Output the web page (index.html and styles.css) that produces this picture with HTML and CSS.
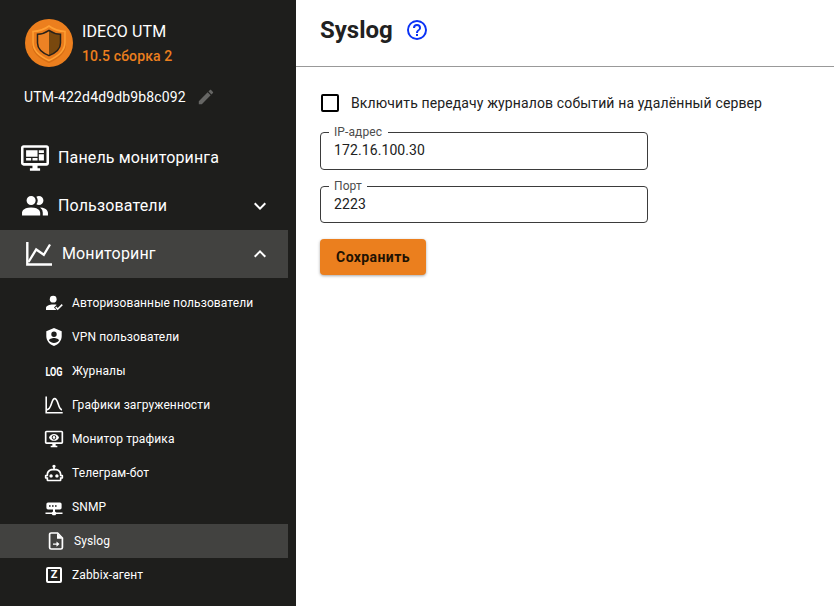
FILE: index.html
```html
<!DOCTYPE html>
<html lang="ru">
<head>
<meta charset="utf-8">
<title>Syslog</title>
<link rel="stylesheet" href="styles.css">
</head>
<body>
<div class="app">
  <aside class="sidebar">
    <header class="brand">
      <svg class="logo" viewBox="0 0 48 48">
        <circle cx="24" cy="24" r="24" fill="#ec7f1e"/>
        <path d="M24 9c-5 3.800-10 5.200-16 5.500v11c0 8.500 7 13.500 16 17.500 9-4 16-9 16-17.500v-11c-6-.300-11-1.700-16-5.500z" fill="#e07317" stroke="#d96f14" stroke-width="2"/>
        <path d="M24 7c-5 3.800-10 5.200-16 5.500v11C8 32 15 37.500 24 41.500c9-4 16-9.500 16-18v-11C34 12.200 29 10.800 24 7z" fill="#e97b1c" stroke="#ffa033" stroke-width="1.600"/>
        <path d="M24 11.500c-4 2.700-7.500 3.800-11.500 4v8.500c0 6 5 10 11.500 12.500z" fill="#ec8224"/>
        <path d="M24 11.500c4 2.700 7.500 3.800 11.500 4v8.500c0 6-5 10-11.500 12.500z" fill="#79480e"/>
        <path d="M24 11.300c-4 2.700-7.500 3.800-11.500 4v8.700c0 6.300 5 10 11.500 12.600 6.500-2.600 11.500-6.300 11.500-12.600v-8.700c-4-.200-7.500-1.300-11.500-4z" fill="none" stroke="#28221a" stroke-width="1.500"/>
      </svg>
      <div class="brand-text">
        <div class="product">IDECO UTM</div>
        <div class="version">10.5 сборка 2</div>
      </div>
    </header>
    <div class="server">
      <span>UTM-422d4d9db9b8c092</span>
      <svg class="edit" viewBox="2 2 20 20"><path d="M20.710 7.040c.390-.390.390-1.040 0-1.410l-2.340-2.340c-.370-.390-1.020-.390-1.410 0l-1.840 1.830 3.750 3.750M3 17.250V21h3.750L17.810 9.930l-3.750-3.750L3 17.250z"/></svg>
    </div>
    <nav>
      <a class="item">
        <svg viewBox="1 1 22 22"><path d="M21 16V4H3V16H21M21 2A2 2 0 0 1 23 4V16A2 2 0 0 1 21 18H14V20H16V22H8V20H10V18H3C1.89 18 1 17.1 1 16V4C1 2.89 1.89 2 3 2H21M5 6H14V11H5V6M15 6H19V8H15V6M19 9V14H15V9H19M5 12H9V14H5V12M10 12H14V14H10V12Z"/></svg>
        <span>Панель мониторинга</span>
      </a>
      <a class="item">
        <svg viewBox="1.200 0.950 21.600 21.600"><path d="M16 17V19H2V17S2 13 9 13 16 17 16 17M12.5 7.500A3.500 3.500 0 1 0 9 11A3.500 3.500 0 0 0 12.500 7.500M15.940 13A5.320 5.320 0 0 1 18 17V19H22V17S22 13.370 15.940 13M15 4A3.390 3.390 0 0 0 13.070 4.590A5 5 0 0 1 13.070 10.410A3.390 3.390 0 0 0 15 11A3.500 3.500 0 0 0 15 4Z"/></svg>
        <span>Пользователи</span>
        <svg class="chevron" viewBox="0 0 24 24"><path d="M7.410 8.580 12 13.170l4.590-4.590L18 10l-6 6-6-6 1.410-1.420z"/></svg>
      </a>
      <a class="item selected">
        <svg viewBox="0 0 28 28"><path d="M2.300 2v22.500H27" fill="none" stroke="#fff" stroke-width="2.400"/><path d="m3.500 22 7.700-12.500 7.600 5.300L25 4.500" fill="none" stroke="#fff" stroke-width="2.300"/></svg>
        <span>Мониторинг</span>
        <svg class="chevron" viewBox="0 0 24 24"><path d="M7.410 15.410 12 10.830l4.590 4.580L18 14l-6-6-6 6 1.410 1.410z"/></svg>
      </a>
      <div class="submenu">
        <a class="sub"><svg viewBox="0 0 20 20"><circle cx="9.200" cy="6.200" r="3.400"/><path d="M2 17v-2c0-2.200 3.100-3.600 7.200-3.600 1.300 0 2.500.1 3.500.400l-2.700 2.700L12.500 17zM13.700 17.300l-2.500-2.600 1-1.100 1.500 1.500 4-4.100 1.100 1.200z"/></svg><span>Авторизованные пользователи</span></a>
        <a class="sub"><svg viewBox="0 0 20 20"><path fill-rule="evenodd" d="M10 1 2.300 4.200v5c0 4.300 3.200 8.400 7.700 9.700 4.500-1.300 7.700-5.400 7.700-9.700v-5zm0 3.500a2.700 2.700 0 1 1 0 5.400 2.700 2.700 0 0 1 0-5.400zm0 6.400c2.200 0 5 1 5 2.500a6 6 0 0 1-10 0c0-1.500 2.800-2.500 5-2.500z"/></svg><span>VPN пользователи</span></a>
        <a class="sub"><span class="log-icon">LOG</span><span>Журналы</span></a>
        <a class="sub"><svg viewBox="0 0 20 20"><path d="M2.200 1.500v16.300h16.500M2.700 14.900c5.600-.600 4.200-11.300 8-11.300s3 10.500 7.300 11.300" fill="none" stroke="#fff" stroke-width="1.600"/></svg><span>Графики загруженности</span></a>
        <a class="sub"><svg viewBox="0 0 24 24"><path d="M3 4V16H21V4H3M3 2H21C22.1 2 23 2.89 23 4V16C23 16.53 22.79 17.04 22.41 17.41C22.04 17.79 21.53 18 21 18H14V20H16V22H8V20H10V18H3C2.47 18 1.96 17.79 1.59 17.41C1.21 17.04 1 16.53 1 16V4C1 2.89 1.89 2 3 2M10.84 8.93C11.15 8.63 11.57 8.45 12 8.45C12.43 8.46 12.85 8.63 13.16 8.94C13.46 9.24 13.64 9.66 13.64 10.09C13.64 10.53 13.46 10.94 13.16 11.25C12.85 11.56 12.43 11.73 12 11.73C11.57 11.73 11.15 11.55 10.84 11.25C10.54 10.94 10.36 10.53 10.36 10.09C10.36 9.66 10.54 9.24 10.84 8.93M10.07 12C10.58 12.53 11.28 12.82 12 12.82C12.72 12.82 13.42 12.53 13.93 12C14.44 11.5 14.73 10.81 14.73 10.09C14.73 9.37 14.44 8.67 13.93 8.16C13.42 7.65 12.72 7.36 12 7.36C11.28 7.36 10.58 7.65 10.07 8.16C9.56 8.67 9.27 9.37 9.27 10.09C9.27 10.81 9.56 11.5 10.07 12M6 10.09C6.94 7.7 9.27 6 12 6C14.73 6 17.06 7.7 18 10.09C17.06 12.5 14.73 14.18 12 14.18C9.27 14.18 6.94 12.5 6 10.09Z"/></svg><span>Монитор трафика</span></a>
        <a class="sub"><svg viewBox="0 0 24 24"><path d="M17.5 15.5C17.5 16.61 16.61 17.5 15.5 17.5S13.5 16.61 13.5 15.5 14.4 13.5 15.5 13.5 17.5 14.4 17.5 15.5M8.5 13.5C7.4 13.5 6.5 14.4 6.5 15.5S7.4 17.5 8.5 17.5 10.5 16.61 10.5 15.5 9.61 13.5 8.5 13.5M23 15V18C23 18.55 22.55 19 22 19H21V20C21 21.11 20.11 22 19 22H5C3.9 22 3 21.11 3 20V19H2C1.45 19 1 18.55 1 18V15C1 14.45 1.45 14 2 14H3C3 10.13 6.13 7 10 7H11V5.73C10.4 5.39 10 4.74 10 4C10 2.9 10.9 2 12 2S14 2.9 14 4C14 4.74 13.6 5.39 13 5.73V7H14C17.87 7 21 10.13 21 14H22C22.55 14 23 14.45 23 15M21 16H19V14C19 11.24 16.76 9 14 9H10C7.24 9 5 11.24 5 14V16H3V17H5V20H19V17H21V16Z"/></svg><span>Телеграм-бот</span></a>
        <a class="sub"><svg viewBox="0 0 20 20"><path fill-rule="evenodd" d="M4 5.500h12a1.600 1.600 0 0 1 1.600 1.600v3.700a1.600 1.600 0 0 1-1.600 1.600h-5v2.100l1.300 1h6.200V17h-6.200l-1 1.300H8.700L7.700 17H1.500v-1.500h6.200l1.300-1v-2.100H4a1.600 1.600 0 0 1-1.600-1.600V7.100A1.600 1.600 0 0 1 4 5.500zm1 2.700v1.500h1.600V8.200zm3 0v1.500h1.600V8.200zm3 0v1.500h1.600V8.200z"/></svg><span>SNMP</span></a>
        <a class="sub selected"><svg viewBox="0 0 20 20"><path d="M11.600 2H5.200A1.600 1.600 0 0 0 3.600 3.600v12.800A1.600 1.600 0 0 0 5.200 18h9.600a1.600 1.600 0 0 0 1.600-1.600V7z" fill="none" stroke="#fff" stroke-width="1.700"/><path d="M11 2.500V7.800h5.400zM7 12.400h3.500v-1.900l3 2.600-3 2.600v-1.900H7z"/></svg><span>Syslog</span></a>
        <a class="sub"><span class="z-icon">Z</span><span>Zabbix-агент</span></a>
      </div>
    </nav>
  </aside>
  <main class="content">
    <header class="page-head">
      <h1>Syslog</h1>
      <svg class="help" viewBox="0 0 24 24"><path d="M11 18h2v-2h-2v2m1-16A10 10 0 0 0 2 12a10 10 0 0 0 10 10 10 10 0 0 0 10-10A10 10 0 0 0 12 2m0 18c-4.410 0-8-3.590-8-8s3.590-8 8-8 8 3.590 8 8-3.590 8-8 8m0-14a4 4 0 0 0-4 4h2a2 2 0 0 1 2-2 2 2 0 0 1 2 2c0 2-3 1.750-3 5h2c0-2.250 3-2.500 3-5a4 4 0 0 0-4-4z"/></svg>
    </header>
    <form class="form">
      <label class="check"><span class="box"></span><span>Включить передачу журналов событий на удалённый сервер</span></label>
      <fieldset class="field address"><legend>IP-адрес</legend><div>172.16.100.30</div></fieldset>
      <fieldset class="field port"><legend>Порт</legend><div>2223</div></fieldset>
      <button type="button" class="save">Сохранить</button>
    </form>
  </main>
</div>
</body>
</html>
```
FILE: styles.css
```css
* { box-sizing: border-box; }
body { margin: 0; font-family: Roboto, "Liberation Sans", sans-serif; color: #212121; background: #fff; }
.app { display: flex; height: 606px; overflow: hidden; }
.sidebar { width: 296px; flex: none; background: #1e1e1c; color: #fff; }
.sidebar svg { fill: #fff; flex: none; }
.brand { display: flex; padding: 19px 0 0 25px; height: 73px; gap: 9px; }
.brand-text { padding-top: 1px; }
.logo { width: 48px; height: 48px; }
.product { font-size: 16px; line-height: 24px; letter-spacing: .12px; }
.version { font-size: 14px; font-weight: 500; line-height: 24px; letter-spacing: .1px; color: #ec7f1e; }
.server { display: flex; align-items: center; height: 48px; padding-left: 24px; gap: 12px; font-size: 14px; letter-spacing: .14px; }
.sidebar .edit { width: 16px; height: 16px; fill: #666664; }
nav { padding-top: 13px; }
.item { display: flex; align-items: center; width: 288px; height: 48px; padding: 0 16px 0 21px; gap: 9px; font-size: 16px; letter-spacing: .14px; }
.item span { padding-bottom: 2px; }
.item > svg { width: 28px; height: 28px; }
.item .chevron { width: 24px; height: 24px; margin-left: auto; }
.selected { background: #424240; }
.item.selected { padding-left: 25px; }
.submenu { padding-top: 8px; }
.sub { display: flex; align-items: center; width: 288px; height: 34px; padding-left: 44px; gap: 8px; font-size: 12px; letter-spacing: .11px; }
.sub.selected { padding-left: 46px; }
.sub svg { width: 20px; height: 20px; }
.log-icon { width: 20px; font-size: 12px; line-height: 16px; font-weight: 700; text-align: center; letter-spacing: 0; transform: translateY(1px) scaleX(.76); white-space: nowrap; display: flex; justify-content: center; }
.z-icon { width: 16px; height: 16px; margin: 0 2px; border: 1.5px solid #fff; border-width: 2px; border-radius: 2px; font-size: 11px; line-height: 12px; font-weight: 700; text-align: center; letter-spacing: 0; }
.content { flex: 1; }
.page-head { display: flex; align-items: center; height: 67px; padding: 0 24px 7px; gap: 12px; border-bottom: 1px solid #999; }
h1 { margin: 0; font-size: 24px; line-height: 32px; font-weight: 700; }
.help { width: 24px; height: 24px; fill: #0a32f5; }
.form { padding: 24px 24px 0; }
.check { display: flex; align-items: center; height: 24px; gap: 12px; font-size: 14px; letter-spacing: .13px; }
.box { width: 18px; height: 18px; margin-left: 1px; border: 2px solid #000; border-radius: 2px; }
.field { width: 328px; margin: 0; padding: 0 13px; border: 1px solid #3b3b3b; border-radius: 4px; font-size: 14px; letter-spacing: .1px; }
.field legend { margin-left: -5px; padding: 0 6px 0 5px; font-size: 12px; line-height: 14px; color: #4d4d4d; }
.port legend { padding-right: 5px; }
.field div { line-height: 22px; }
.address { height: 45px; margin-top: 10px; }
.port { height: 44px; margin-top: 9px; }
.save { display: block; width: 106px; height: 36px; margin-top: 16px; padding: 0; border: 0; border-radius: 4px; background: #eb7f1e; color: #211203; font: 700 14px/36px Roboto, sans-serif; letter-spacing: .4px; box-shadow: 0 1px 3px rgba(0,0,0,.35); }
```
